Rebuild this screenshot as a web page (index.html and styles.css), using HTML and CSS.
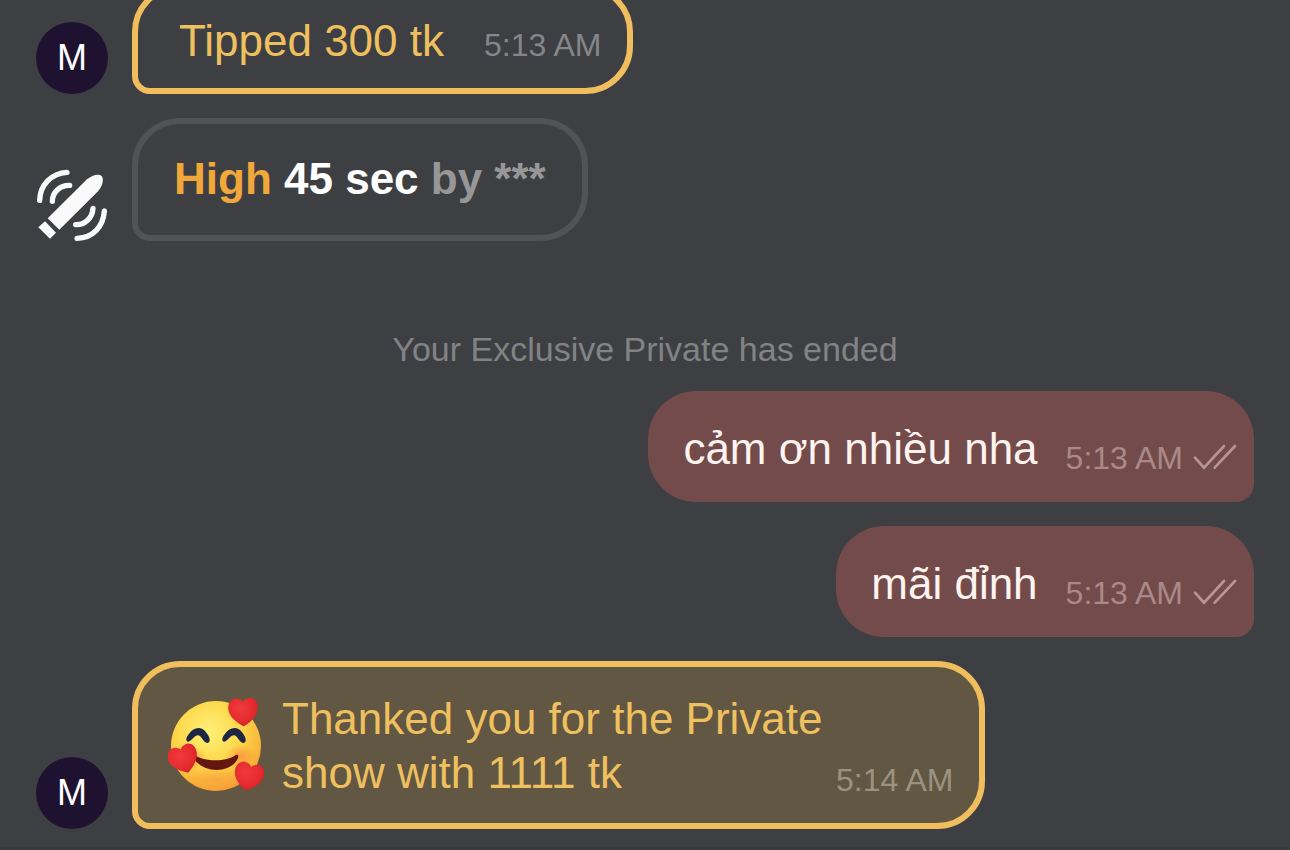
FILE: index.html
```html
<!DOCTYPE html>
<html lang="en">
<head>
  <meta charset="UTF-8">
  <meta name="viewport" content="width=device-width, initial-scale=1.0">
  <title>Chat</title>
  <link rel="stylesheet" href="styles.css">
</head>
<body>
  <svg width="0" height="0" class="defs" aria-hidden="true">
    <symbol id="check" viewBox="459 192 132 78">
      <path d="M465 233 L492 263 L552 198 M524 263 L585 198" fill="none" stroke="currentColor" stroke-width="8" stroke-linecap="round"/>
    </symbol>
  </svg>

  <main class="chat">
    <div class="message">
      <div class="avatar">M</div>
      <div class="bubble tip">
        <span class="text">Tipped 300 tk</span>
        <time class="time">5:13 AM</time>
      </div>
    </div>

    <div class="message">
      <svg class="toy-icon" viewBox="33 39 216 216" aria-hidden="true">
        <path d="M68 187 L186 70 C202 56 222 52 230 60 C238 70 232 91 219 106 L103 221 Z" fill="#fafafa"/>
        <path d="M60 196 L93 230 L75 248 L40 214 Z" fill="#fafafa"/>
        <g fill="none" stroke="#fafafa" stroke-width="16" stroke-linecap="round">
          <path d="M44 133 C45 88 79 51 126 49"/>
          <path d="M82 136 C82 108 106 87 134 88"/>
          <path d="M204 157 C202 188 178 207 152 206"/>
          <path d="M238 165 C235 212 204 245 156 247"/>
        </g>
      </svg>
      <div class="bubble toy">
        <span class="text"><span class="level">High</span> 45 sec <span class="by">by ***</span></span>
      </div>
    </div>

    <p class="notice">Your Exclusive Private has ended</p>

    <div class="message own">
      <div class="bubble">
        <span class="text" lang="vi">cảm ơn nhiều nha</span>
        <time class="time">5:13 AM</time>
        <svg class="check" aria-hidden="true"><use href="#check"/></svg>
      </div>
    </div>

    <div class="message own">
      <div class="bubble">
        <span class="text" lang="vi">mãi đỉnh</span>
        <time class="time">5:13 AM</time>
        <svg class="check" aria-hidden="true"><use href="#check"/></svg>
      </div>
    </div>

    <div class="message">
      <div class="avatar">M</div>
      <div class="bubble thanks">
        <svg class="emoji" viewBox="39 36 288 288" aria-hidden="true">
          <defs>
            <radialGradient id="face" cx="0.42" cy="0.34" r="0.68">
              <stop offset="0" stop-color="#fff07a"/>
              <stop offset="0.5" stop-color="#fdd94c"/>
              <stop offset="0.85" stop-color="#f9b83a"/>
              <stop offset="1" stop-color="#f59a38"/>
            </radialGradient>
            <radialGradient id="blush">
              <stop offset="0" stop-color="#fb6a3c" stop-opacity="0.5"/>
              <stop offset="1" stop-color="#fb6a3c" stop-opacity="0"/>
            </radialGradient>
            <radialGradient id="red" cx="0.4" cy="0.35" r="0.7">
              <stop offset="0" stop-color="#f03a3a"/>
              <stop offset="0.7" stop-color="#e42a2e"/>
              <stop offset="1" stop-color="#c91f2a"/>
            </radialGradient>
            <path id="heart" d="M0 43 C-20 32 -45 13 -45 -12 C-45 -30 -33 -41 -21 -41 C-11 -41 -3 -36 0 -30 C4 -37 13 -41 23 -41 C36 -40 45 -28 44 -12 C43 13 19 33 0 43 Z" fill="url(#red)"/>
          </defs>
          <circle cx="183" cy="180" r="135" fill="url(#face)"/>
          <ellipse cx="110" cy="216" rx="46" ry="34" fill="url(#blush)"/>
          <ellipse cx="256" cy="210" rx="46" ry="34" fill="url(#blush)"/>
          <ellipse cx="180" cy="280" rx="100" ry="34" fill="url(#blush)" opacity="0.5"/>
          <path d="M98 167 C91 164 94 154 101 145 C116 124 138 119 153 139 C161 149 167 160 163 167 C158 174 149 170 145 163 C134 144 126 143 114 157 C108 163 104 168 98 167 Z" fill="#1d2743"/>
          <path d="M206 167 C199 164 202 154 209 145 C224 124 246 119 261 139 C269 149 275 160 271 167 C266 174 257 170 253 163 C242 144 234 143 222 157 C216 163 212 168 206 167 Z" fill="#1d2743"/>
          <path d="M119 207 C145 227 213 229 241 208 C248 204 252 209 249 216 C228 264 145 263 117 218 Z" fill="#641611"/>
          <use href="#heart" transform="translate(265 78) rotate(-2)"/>
          <use href="#heart" transform="translate(86 219) rotate(-18)"/>
          <use href="#heart" transform="translate(281 272) rotate(14)"/>
        </svg>
        <span class="text">Thanked you for the Private show with 1111 tk</span>
        <time class="time">5:14 AM</time>
      </div>
    </div>
  </main>
</body>
</html>
```

FILE: styles.css
```css
* {
  box-sizing: border-box;
}
body {
  margin: 0;
  background-color: #3e3f42;
  color: #fff;
  font-family: "Liberation Sans", Arial, sans-serif;
}
.defs {
  display: block;
}
/* newest message stays at the bottom, older ones run off the top */
.chat {
  display: flex;
  flex-direction: column;
  justify-content: flex-end;
  gap: 24px;
  height: 100vh;
  padding: 0 36px 18px;
  border-bottom: 3px solid #3a393c;
  overflow: hidden;
}
.message {
  display: flex;
  flex-shrink: 0;
  align-items: flex-end;
  gap: 24px;
}
.own {
  justify-content: flex-end;
}
.avatar {
  width: 72px;
  height: 72px;
  border-radius: 50%;
  background-color: #1f1130;
  font-size: 36px;
  line-height: 72px;
  text-align: center;
}
.toy-icon {
  width: 72px;
  height: 72px;
}
.bubble {
  display: flex;
  align-items: flex-end;
  border: 6px solid transparent;
  border-radius: 48px 48px 48px 18px;
}
.text {
  font-size: 44px;
  line-height: 54px;
}
.time {
  color: #85868a;
  font-size: 32px;
  line-height: 36px;
}
.tip {
  align-items: baseline;
  gap: 40px;
  padding: 24px 26px 20px 41px;
  border-color: #f0be5c;
  color: #efc05f;
}
.toy {
  padding: 28px 36px 29px 36px;
  border-color: #525357;
  font-weight: bold;
}
.level {
  color: #f2a73b;
}
.by {
  color: #979797;
}
.notice {
  margin: 66px 0 0;
  color: #828385;
  font-size: 34px;
  line-height: 36px;
  text-align: center;
}
.own .bubble {
  padding: 31px 17px 26px 35px;
  border: none;
  border-radius: 48px 48px 18px 48px;
  background-color: #734b4b;
  color: #fff3f0;
}
.own .time {
  margin-left: 28px;
  color: #ab8989;
}
.check {
  width: 44px;
  height: 26px;
  margin: 0 0 6px 10px;
  color: #b89595;
}
.thanks {
  padding: 25px 26px 23px 30px;
  border-color: #f0be5c;
  background-color: #625742;
  color: #efc05f;
}
.emoji {
  flex-shrink: 0;
  align-self: center;
  width: 96px;
  height: 96px;
  margin-right: 18px;
}
.thanks .text {
  max-width: 554px;
}
.thanks .time {
  margin-bottom: 2px;
  color: #9c9280;
}
```
